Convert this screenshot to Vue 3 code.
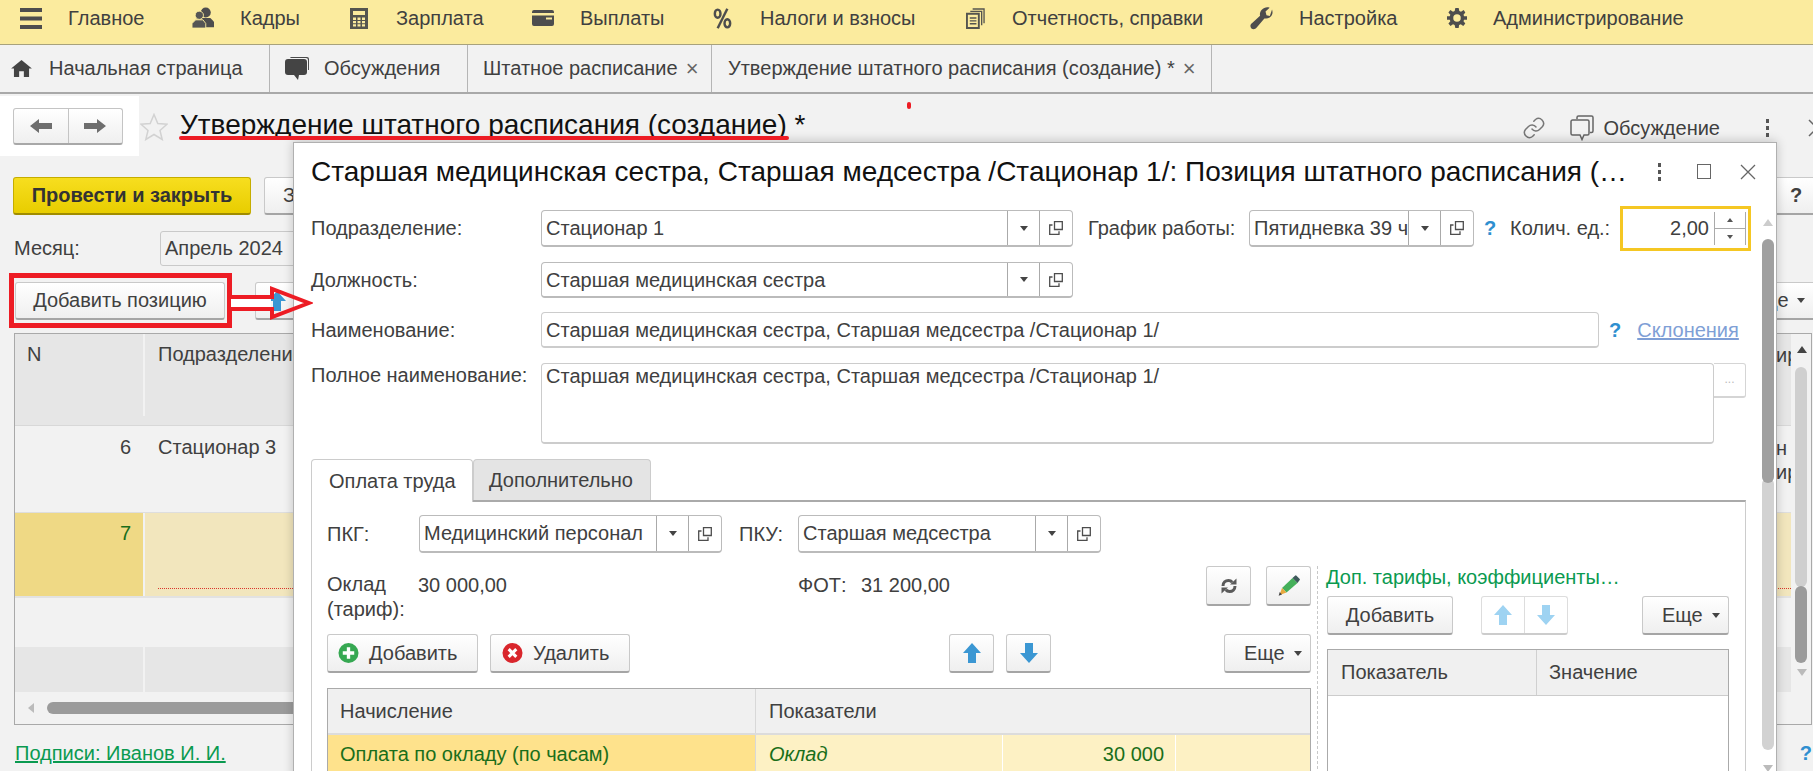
<script setup>
// ширина — от значка до следующего значка, offset — от значка до подписи
const menu = [
  { icon: "i-staff", label: "Кадры", width: 159, offset: 49, w: 24, h: 22 },
  { icon: "i-calc", label: "Зарплата", width: 182, offset: 46, w: 18, h: 21 },
  { icon: "i-wallet", label: "Выплаты", width: 180, offset: 48, w: 22, h: 16 },
  { icon: "i-percent", label: "Налоги и взносы", width: 254, offset: 48, w: 21, h: 21 },
  { icon: "i-docs", label: "Отчетность, справки", width: 284, offset: 46, w: 19, h: 21 },
  { icon: "i-wrench", label: "Настройка", width: 197, offset: 49, w: 23, h: 23 },
  { icon: "i-gear", label: "Администрирование", width: 340, offset: 46, w: 20, h: 20 }
];
</script>

<template>
  <div class="page">
    <svg class="sprite" aria-hidden="true">
      <symbol id="i-burger" viewBox="0 0 22 21"><path d="M0 0h22v4H0zM0 8.500h22v4H0zM0 17h22v4H0z" fill="#4d4d4d" /></symbol>
      <symbol id="i-staff" viewBox="0 0 26 24"><circle cx="16" cy="6" r="5.500" fill="#4d4d4d" /><path d="M11 12h10l4 4v6H13z" fill="#4d4d4d" /><circle cx="9" cy="9" r="4.500" fill="#555" stroke="#fbeb9e" /><path d="M1 23v-5l4-4h8l3 4v5z" fill="#555" stroke="#fbeb9e" /></symbol>
      <symbol id="i-calc" viewBox="0 0 18 21"><path fill-rule="evenodd" fill="#55554f" d="M0 0h18v21H0zM3 3v4h12V3zM3 9.500v2.500h3V9.500zM7.500 9.500v2.500h3V9.500zM12 9.500v2.500h3V9.500zM3 13v2.200h3V13zM7.500 13v2.200h3V13zM12 13v2.200h3V13zM3 16.200v2.300h3v-2.300zM7.500 16.200v2.300h3v-2.300zM12 16.200v2.300h3v-2.300z" /></symbol>
      <symbol id="i-wallet" viewBox="0 0 22 16"><path fill="#4d4d4d" fill-rule="evenodd" d="M2 0h18a2 2 0 0 1 2 2v1H0V2a2 2 0 0 1 2-2zM0 5.500h22V14a2 2 0 0 1-2 2H2a2 2 0 0 1-2-2zM14 7.500v2h6v-2z" /></symbol>
      <symbol id="i-percent" viewBox="0 0 24 26"><g fill="none" stroke="#4d4d4d" stroke-width="3"><ellipse cx="6" cy="7" rx="3.500" ry="5" /><ellipse cx="18" cy="19" rx="3.500" ry="5" /><path d="M18 1 6 25" /></g></symbol>
      <symbol id="i-docs" viewBox="0 0 20 22"><g fill="none" stroke="#55554f" stroke-width="1.400"><path d="M7 1h12v15" /><path d="M4.500 3.500h12V18" /><path d="M1 6h12.500v15H1z" fill="#fbeb9e" stroke-width="2" /><path d="M4 10.500h7M4 13.500h7M4 16.500h7" /></g></symbol>
      <symbol id="i-wrench" viewBox="0 0 24 24"><path fill="#4d4d4d" d="M23 2.500c1.200 3.500.3 6.500-2.500 8.500-1.800 1.200-3.800 1.300-5.500.9L7 21.500c-1.500 2-4 2.300-5.500.9S0 18.500 2 17l8.500-7.800c-.5-2 0-4.500 1.800-6.300C14.500.5 17.500-.3 20.500.7l-4.300 4 1 3.800 3.500.8z" /></symbol>
      <symbol id="i-gear" viewBox="0 0 24 24"><path fill="#4d4d4d" fill-rule="evenodd" d="M10 0h4l.8 3.500 2 .9L20 2.500 22 5.500 19.800 8l.7 2H24v4h-3.500l-.7 2 2.200 2.500-2.500 3-3-2-2 .9L14 24h-4l-.8-3.600-2-.9-3 2L1.700 18.500 4 16l-.7-2H0v-4h3.300L4 8 1.700 5.500 4 2.500l3.200 1.900 2-.9zM12 7.500a4.500 4.500 0 1 0 0 9 4.500 4.500 0 0 0 0-9z" /></symbol>
      <symbol id="i-home" viewBox="0 0 22 18"><path fill="#444" d="M11 0 22 9h-3v9h-5.500v-6h-5v6H3V9H0z" /></symbol>
      <symbol id="i-chat" viewBox="0 0 24 23"><path fill="#4a4a4a" d="M7 0h15a2 2 0 0 1 2 2v11h-1V3a2 2 0 0 0-2-2H5a2 2 0 0 1 2-1z" /><path fill="#444" d="M3 2h16a3 3 0 0 1 3 3v10a3 3 0 0 1-3 3h-5l-1 5-4-5H3a3 3 0 0 1-3-3V5a3 3 0 0 1 3-3z" /></symbol>
      <symbol id="i-open" viewBox="0 0 14 14"><path fill="none" stroke="#4d4d4d" stroke-width="1.300" d="M5.500 .7h7.800v7.800H5.500zM3.500 4H.7v9.300H10v-3" /></symbol>
      <symbol id="i-up" viewBox="0 0 18 20"><path d="M9 0 18 10h-5v10H5V10H0z" /></symbol>
    </svg>

    <header class="topbar">
      <svg class="burger"><use href="#i-burger" /></svg>
      <span class="menu-first">Главное</span>
      <div v-for="item in menu" :key="item.label" class="menu-item" :style="{ width: item.width + 'px' }">
        <span class="menu-slot" :style="{ width: item.offset + 'px' }">
          <svg :style="{ width: item.w + 'px', height: item.h + 'px' }"><use :href="'#' + item.icon" /></svg>
        </span>
        <span>{{ item.label }}</span>
      </div>
    </header>

    <nav class="tabs">
      <div class="tab tab-home"><svg class="tab-icon"><use href="#i-home" /></svg>Начальная страница</div>
      <div class="tab tab-chat"><svg class="tab-chat-icon"><use href="#i-chat" /></svg>Обсуждения</div>
      <div class="tab tab-staff">Штатное расписание <span class="tab-x">×</span></div>
      <div class="tab tab-doc">Утверждение штатного расписания (создание) * <span class="tab-x">×</span></div>
    </nav>

    <section class="head">
      <div class="nav-box">
        <div class="nav-btns">
          <span class="nav-arrow"><svg viewBox="0 0 22 14"><path d="M0 7 9 0v4h13v6H9v4z" fill="#6e6e6e" /></svg></span>
          <span class="nav-arrow"><svg viewBox="0 0 22 14"><path d="M22 7 13 0v4H0v6h13v4z" fill="#6e6e6e" /></svg></span>
        </div>
      </div>
      <svg class="star" viewBox="0 0 28 28"><path d="M14 1.500 17.800 10.500 27 11.200 20 17.500 22.200 26.500 14 21.500 5.800 26.500 8 17.500 1 11.200 10.200 10.500z" fill="none" stroke="#d2d2d2" stroke-width="1.500" /></svg>
      <h1 class="doc-title">Утверждение штатного расписания (создание) *</h1>
      <div class="head-tools">
        <svg class="link-icon" viewBox="0 0 24 24"><g fill="none" stroke="#777" stroke-width="1.500" stroke-linecap="round"><path d="M10 13a5 5 0 0 0 7.500.5l3-3a5 5 0 0 0-7-7l-1.700 1.700" /><path d="M14 11a5 5 0 0 0-7.500-.5l-3 3a5 5 0 0 0 7 7l1.700-1.700" /></g></svg>
        <svg class="talk-icon" viewBox="0 0 24 26"><g fill="none" stroke="#666" stroke-width="1.500"><path d="M7 4V2.500A1.500 1.500 0 0 1 8.500 1h13A1.500 1.500 0 0 1 23 2.500V16a1.500 1.500 0 0 1-1.500 1.500H20" /><path d="M2.500 5h15A1.500 1.500 0 0 1 19 6.500v12a1.500 1.500 0 0 1-1.500 1.500H14l-2 4.500L10 20H2.500A1.500 1.500 0 0 1 1 18.500v-12A1.500 1.500 0 0 1 2.500 5z" /></g></svg>
        <span class="talk">Обсуждение</span>
        <span class="dots"><i></i><i></i><i></i></span>
        <svg class="head-chevron" viewBox="0 0 10 18"><path d="m1 1 8 8-8 8" fill="none" stroke="#666" stroke-width="1.500" /></svg>
      </div>
    </section>

    <section class="command">
      <button class="btn btn-primary">Провести и закрыть</button>
      <button class="btn btn-save">Записать</button>
      <button class="btn btn-help">?</button>
    </section>

    <section class="month">
      <span class="month-label">Месяц:</span>
      <div class="month-input">Апрель 2024</div>
    </section>

    <section class="actions">
      <button class="btn btn-add-pos">Добавить позицию</button>
      <button class="btn btn-move"><svg viewBox="0 0 18 20" fill="#3b97d3"><use href="#i-up" /></svg></button>
      <button class="btn btn-more-bg">Еще <b class="caret"></b></button>
    </section>

    <section class="grid">
      <div class="grid-row grid-header"><div class="c-n">N</div><div class="c-name">Подразделение</div><div class="c-end">ир</div></div>
      <div class="grid-row grid-six"><div class="c-n right">6</div><div class="c-name">Стационар 3</div><div class="c-end">н<br />ир</div></div>
      <div class="grid-row grid-seven"><div class="c-n right">7</div><div class="c-name"><i class="dotted"></i></div></div>
      <div class="grid-row grid-empty"></div>
      <div class="grid-row grid-footer"><div class="c-n"></div><div class="c-name"></div></div>
      <div class="grid-scroll"><b class="tri-left"></b><i class="grid-thumb"></i></div>
      <div class="grid-vscroll"><b class="tri-up"></b><i class="v-light"></i><i class="v-dark"></i><b class="tri-down"></b></div>
    </section>

    <div class="bottom">
      <a class="sign">Подписи: Иванов И. И.</a>
      <span class="hint bottom-hint">?</span>
    </div>

    <!-- окно позиции поверх документа -->
    <div class="modal">
      <div class="modal-head">
        <h2>Старшая медицинская сестра, Старшая медсестра /Стационар 1/: Позиция штатного расписания (…</h2>
        <span class="dots"><i></i><i></i><i></i></span>
        <span class="win-max"></span>
        <svg class="win-close" viewBox="0 0 16 16"><path d="m1 1 14 14M15 1 1 15" fill="none" stroke="#666" stroke-width="1.300" /></svg>
      </div>

      <div class="form-row row-one">
        <label class="lbl">Подразделение:</label>
        <div class="field w-sub"><span class="val">Стационар 1</span><span class="drop"><b class="caret"></b></span><span class="open"><svg><use href="#i-open" /></svg></span></div>
        <label class="lbl lbl-sched">График работы:</label>
        <div class="field w-sched"><span class="val">Пятидневка 39 ч</span><span class="drop"><b class="caret"></b></span><span class="open"><svg><use href="#i-open" /></svg></span></div>
        <span class="hint hint-sched">?</span>
        <label class="lbl lbl-qty">Колич. ед.:</label>
        <div class="qty">
          <span class="qty-val">2,00</span>
          <span class="spin"><span><b class="tiny-up"></b></span><span><b class="tiny-down"></b></span></span>
        </div>
      </div>

      <div class="form-row row-two">
        <label class="lbl">Должность:</label>
        <div class="field w-sub"><span class="val">Старшая медицинская сестра</span><span class="drop"><b class="caret"></b></span><span class="open"><svg><use href="#i-open" /></svg></span></div>
      </div>

      <div class="form-row row-three">
        <label class="lbl">Наименование:</label>
        <div class="field w-name"><span class="val">Старшая медицинская сестра, Старшая медсестра /Стационар 1/</span></div>
        <span class="hint hint-name">?</span>
        <a class="decl">Склонения</a>
      </div>

      <div class="form-row row-four">
        <label class="lbl lbl-top">Полное наименование:</label>
        <div class="area">Старшая медицинская сестра, Старшая медсестра /Стационар 1/</div>
        <span class="area-btn">...</span>
      </div>

      <div class="page-tabs">
        <div class="ptab ptab-on">Оплата труда</div>
        <div class="ptab ptab-off">Дополнительно</div>
      </div>

      <div class="panel">
        <div class="pay">
          <div class="pkg-row">
            <label class="lbl lbl-pkg">ПКГ:</label>
            <div class="field w-pkg"><span class="val">Медицинский персонал</span><span class="drop"><b class="caret"></b></span><span class="open"><svg><use href="#i-open" /></svg></span></div>
            <label class="lbl lbl-pku">ПКУ:</label>
            <div class="field w-pku"><span class="val">Старшая медсестра</span><span class="drop"><b class="caret"></b></span><span class="open"><svg><use href="#i-open" /></svg></span></div>
          </div>

          <div class="sum-row">
            <div class="sum-label">Оклад<br />(тариф):</div>
            <div class="sum-value">30 000,00</div>
            <div class="fot-label">ФОТ:</div>
            <div class="fot-value">31 200,00</div>
            <button class="btn btn-square btn-refresh">
              <svg viewBox="0 0 16 16"><g fill="none" stroke="#5a5a5a" stroke-width="3"><path d="M2 8c0-3.500 2.500-5.500 5.500-5.500 1.500 0 2.800.6 3.700 1.700" /><path d="M14 8c0 3.500-2.500 5.500-5.500 5.500-1.500 0-2.800-.6-3.700-1.700" /></g><path d="M9 6.500h6.500V.5zM7 9.500H.5v6z" fill="#5a5a5a" /></svg>
            </button>
            <button class="btn btn-square btn-pencil">
              <svg viewBox="0 0 22 21"><path d="M14.500 3 19.500 8 8.500 17.500 4 13z" fill="#45b05a" /><path d="M14.500 3 17 .7a1 1 0 0 1 1.500 0l3 3a1 1 0 0 1 0 1.500L19.500 8z" fill="#3f5a5c" /><path d="M4 13 8.500 17.500 1.500 20z" fill="#e8a83e" /><path d="M.7 20.700 1.700 17 4 19.500z" fill="#444" /></svg>
            </button>
          </div>

          <div class="tool-row">
            <button class="btn btn-add"><svg class="round" viewBox="0 0 22 22"><circle cx="11" cy="11" r="10.500" fill="#36a852" /><path d="M11 5v12M5 11h12" stroke="#fff" stroke-width="3.500" /></svg>Добавить</button>
            <button class="btn btn-del"><svg class="round" viewBox="0 0 22 22"><circle cx="11" cy="11" r="10.500" fill="#d9262c" /><path d="m7 7 8 8M15 7l-8 8" stroke="#fff" stroke-width="3.200" /></svg>Удалить</button>
            <button class="btn btn-arrow btn-up"><svg viewBox="0 0 18 20" fill="#3b97d3"><use href="#i-up" /></svg></button>
            <button class="btn btn-arrow btn-down"><svg class="flip" viewBox="0 0 18 20" fill="#3b97d3"><use href="#i-up" /></svg></button>
            <button class="btn btn-more">Еще <b class="caret"></b></button>
          </div>

          <div class="accr">
            <div class="accr-head"><div class="a-name">Начисление</div><div class="a-ind">Показатели</div></div>
            <div class="accr-row"><div class="a-name">Оплата по окладу (по часам)</div><div class="a-ind">Оклад</div><div class="a-sum">30 000</div><div class="a-rest"></div></div>
          </div>
        </div>

        <div class="extra">
          <div class="extra-title">Доп. тарифы, коэффициенты…</div>
          <div class="extra-tools">
            <button class="btn btn-extra-add">Добавить</button>
            <div class="arrow-pair">
              <span><svg viewBox="0 0 18 20" fill="#9ed3f2"><use href="#i-up" /></svg></span>
              <span><svg class="flip" viewBox="0 0 18 20" fill="#9ed3f2"><use href="#i-up" /></svg></span>
            </div>
            <button class="btn btn-more btn-more-extra">Еще <b class="caret"></b></button>
          </div>
          <div class="extra-table">
            <div class="extra-head"><div class="e-ind">Показатель</div><div class="e-val">Значение</div></div>
          </div>
        </div>
      </div>

      <div class="modal-scroll"><b class="tri-up pale"></b><i class="ms-track"></i><i class="ms-thumb"></i><b class="tri-down pale"></b></div>
    </div>

    <!-- красные пометки на скриншоте -->
    <i class="mark-box"></i>
    <svg class="mark-arrow" viewBox="0 0 82 36"><path d="M2 11h39V3l37 14-37 14v-8H2z" fill="none" stroke="#ed1c24" stroke-width="4" /><path d="M0 13h40v8H0z" fill="#fff" /></svg>
    <i class="mark-line"></i>
    <i class="mark-dot"></i>
  </div>
</template>

<style scoped>
.page {
  position: relative;
  width: 1813px;
  height: 771px;
  overflow: hidden;
  background: #f2f2f2;
  color: #404040;
  font: 20px "Liberation Sans", Arial, sans-serif;
}
.sprite { position: absolute; width: 0; height: 0; }

.topbar {
  display: flex;
  align-items: center;
  height: 36px;
  padding: 0 0 8px 20px;
  background: #fbeb9e;
  border-bottom: 1px solid #a8a27c;
}
.burger { width: 22px; height: 21px; margin-right: 26px; flex: none; }
.menu-first { width: 123px; flex: none; }
.menu-item { display: flex; align-items: center; flex: none; white-space: nowrap; }
.menu-slot { display: flex; align-items: center; flex: none; }

.tabs {
  display: flex;
  height: 47px;
  border-bottom: 2px solid #a9a9a9;
}
.tab {
  display: flex;
  align-items: center;
  border-right: 1px solid #b5b5b5;
  white-space: nowrap;
  box-sizing: border-box;
}
.tab-home { width: 270px; padding-left: 11px; }
.tab-icon { width: 21px; height: 17px; margin-right: 17px; }
.tab-chat { width: 198px; padding-left: 15px; }
.tab-chat-icon { width: 24px; height: 23px; margin-right: 15px; }
.tab-staff { width: 244px; padding-left: 15px; }
.tab-doc { width: 500px; padding-left: 16px; }
.tab-x { margin-left: 8px; font-size: 22px; color: #666; }

.head { display: flex; height: 62px; align-items: center; }
.nav-box { width: 139px; height: 60px; background: #fff; flex: none; margin-top: 1px; padding: 12px 0 0 13px; box-sizing: border-box; }
.nav-btns {
  display: flex;
  width: 110px;
  height: 37px;
  border: 1px solid #c4c4c4;
  border-bottom: 2px solid #a8a8a8;
  border-radius: 3px;
  background: linear-gradient(#fff, #efefef);
  box-sizing: border-box;
}
.nav-arrow { flex: 1; display: flex; align-items: center; justify-content: center; }
.nav-arrow + .nav-arrow { border-left: 1px solid #c4c4c4; }
.nav-arrow svg { width: 22px; height: 14px; }
.star { width: 28px; height: 28px; margin-left: 1px; margin-top: 3px; flex: none; }
.doc-title { margin: 0 0 0 12px; font-size: 28px; font-weight: 400; color: #111; white-space: nowrap; flex: none; }
.head-tools { flex: 1; display: flex; align-items: center; justify-content: flex-end; height: 100%; }
.link-icon { width: 24px; height: 24px; margin-right: 24px; margin-top: 6px; }
.talk-icon { width: 24px; height: 26px; margin-right: 9px; margin-top: 6px; }
.talk { margin-top: 6px; margin-right: 46px; }
.head-tools .dots { margin-top: 6px; margin-right: 38px; }
.head-chevron { width: 10px; height: 18px; margin-top: 6px; margin-right: -5px; }
.dots { display: flex; flex-direction: column; gap: 3px; width: 4px; flex: none; }
.dots i { width: 3px; height: 4px; background: #555; }

.btn {
  display: inline-flex;
  align-items: center;
  justify-content: center;
  height: 38px;
  padding: 0;
  border: 1px solid #c9c9c9;
  border-bottom: 2px solid #a5a5a5;
  border-radius: 3px;
  background: linear-gradient(#fff, #efefef);
  color: #404040;
  font: inherit;
  box-sizing: border-box;
  white-space: nowrap;
}
.caret { display: inline-block; width: 0; height: 0; border: 4px solid transparent; border-top: 5px solid #444; border-bottom: 0; }

.command { display: flex; height: 38px; margin-top: 21px; padding-left: 13px; position: relative; }
.btn-primary {
  width: 238px;
  border-color: #c5ad00;
  border-bottom-color: #a08c00;
  background: linear-gradient(#f7de1f, #e8cd00);
  color: #333;
  font-weight: 700;
}
.btn-save { width: 100px; margin-left: 13px; justify-content: flex-start; padding-left: 18px; }
.btn-help { position: absolute; left: 1760px; width: 60px; justify-content: flex-start; padding-left: 29px; font-weight: 700; }

.month { display: flex; align-items: center; height: 36px; margin-top: 15px; padding-left: 14px; }
.month-label { width: 146px; }
.month-input { width: 300px; height: 35px; line-height: 33px; padding-left: 4px; border: 1px solid #c9c9c9; border-radius: 3px; background: #f2f2f2; box-sizing: border-box; }

.actions { position: relative; display: flex; height: 38px; margin-top: 16px; padding-left: 15px; }
.btn-add-pos { width: 210px; }
.btn-move { width: 100px; margin-left: 30px; justify-content: flex-start; padding-left: 12px; }
.btn-move svg { width: 18px; height: 20px; }
.btn-more-bg { position: absolute; left: 1727px; width: 100px; justify-content: flex-start; padding-left: 20px; gap: 8px; }

.grid { position: relative; height: 392px; margin: 13px 1px 0 14px; border: 1px solid #a9a9a9; box-sizing: border-box; overflow: hidden; }
.grid-row { display: flex; }
.c-n { width: 130px; padding: 0 12px; box-sizing: border-box; border-right: 2px solid #f2f2f2; }
.right { text-align: right; }
.c-name { flex: 1; position: relative; padding: 0 13px; }
.c-end { width: 35px; line-height: 24px; overflow: hidden; flex: none; }
.grid-header { height: 92px; background: #e6e6e6; padding-top: 9px; box-sizing: border-box; border-bottom: 1px solid #d8d8d8; }
.grid-header .c-n { height: 100%; margin-top: -9px; padding-top: 9px; }
.grid-six { height: 87px; padding-top: 10px; box-sizing: border-box; border-bottom: 1px solid #dedede; }
.grid-seven { height: 85px; color: #1a6e1a; border-bottom: 2px solid #e2e2e2; box-sizing: border-box; padding-right: 20px; }
.grid-seven .c-n { background: #efd985; padding-top: 9px; }
.grid-seven .c-name { background: #f2e6bd; }
.dotted { position: absolute; left: 13px; right: 0; bottom: 7px; border-top: 1px dotted #d9362c; }
.grid-empty { height: 49px; }
.grid-footer { height: 45px; background: #e6e6e6; padding-right: 20px; }
.grid-scroll { position: absolute; left: 0; right: 0; top: 368px; height: 14px; }
.grid-thumb { position: absolute; left: 32px; right: 180px; height: 12px; background: #9b9b9b; border-radius: 6px; }
.tri-left { position: absolute; left: 13px; top: 1px; border: 5px solid transparent; border-right: 6px solid #bbb; border-left: 0; }
.grid-vscroll { position: absolute; top: 0; right: 0; width: 20px; height: 100%; background: #f2f2f2; }
.tri-up, .tri-down { position: absolute; width: 0; height: 0; border: 5px solid transparent; }
.tri-up { border-bottom: 7px solid #444; border-top: 0; }
.tri-down { border-top: 7px solid #bbb; border-bottom: 0; }
.grid-vscroll .tri-up { top: 12px; left: 6px; }
.grid-vscroll .tri-down { top: 335px; left: 6px; }
.v-light { position: absolute; left: 4px; top: 33px; width: 12px; height: 220px; border-radius: 6px; background: #cfcfcf; }
.v-dark { position: absolute; left: 4px; top: 252px; width: 12px; height: 77px; border-radius: 6px; background: #9b9b9b; }

.bottom { display: flex; justify-content: space-between; margin: 17px 0 0 15px; }
.sign { color: #0a9a50; text-decoration: underline; }
.bottom-hint { margin-right: 1px; }

.modal {
  position: absolute;
  left: 293px;
  top: 142px;
  width: 1484px;
  height: 640px;
  padding-left: 17px;
  background: #fff;
  border: 1px solid #b0b0b0;
  box-sizing: border-box;
  box-shadow: 0 -1px 10px rgba(0, 0, 0, 0.2);
}
.modal-head { height: 67px; display: flex; align-items: center; padding-bottom: 10px; box-sizing: border-box; }
.modal-head h2 { width: 1330px; flex: none; margin: 0; font-size: 28px; font-weight: 400; color: #111; white-space: nowrap; overflow: hidden; }
.modal-head .dots { margin-left: 17px; }
.win-max { width: 14px; height: 15px; margin-left: 35px; border: 1.500px solid #666; box-sizing: border-box; flex: none; }
.win-close { width: 16px; height: 16px; margin-left: 29px; flex: none; }

.form-row { display: flex; align-items: center; }
.row-one { height: 37px; }
.row-two { height: 36px; margin-top: 15px; }
.row-three { height: 36px; margin-top: 14px; }
.row-four { height: 81px; margin-top: 15px; align-items: flex-start; }
.lbl { flex: none; width: 230px; white-space: nowrap; }
.lbl-top { padding-top: 1px; }
.field {
  display: flex;
  flex: none;
  height: 100%;
  border: 1px solid #bbb;
  border-bottom-width: 2px;
  border-radius: 4px;
  box-sizing: border-box;
  background: #fff;
}
.val { flex: 1; min-width: 0; padding-left: 4px; line-height: 34px; overflow: hidden; white-space: nowrap; }
.drop, .open { display: flex; align-items: center; justify-content: center; flex: none; border-left: 1px solid #aaa; }
.drop { width: 31px; }
.open { width: 32px; }
.open svg { width: 14px; height: 14px; }
.w-sub { width: 532px; }
.lbl-sched { width: 161px; margin-left: 15px; }
.w-sched { width: 225px; }
.hint { flex: none; color: #2f8fd0; font-weight: 700; }
.hint-sched { width: 26px; margin-left: 10px; }
.lbl-qty { width: 110px; }
.qty { flex: none; display: flex; width: 131px; height: 45px; border: 3px solid #f5c723; box-sizing: border-box; }
.qty-val { width: 86px; line-height: 38px; text-align: right; }
.spin { display: flex; flex-direction: column; flex: none; width: 32px; margin: 3px 0 3px 5px; border: 1px solid #aaa; border-width: 0 1px; box-sizing: border-box; }
.spin span { flex: 1; display: flex; align-items: center; justify-content: center; }
.spin span + span { border-top: 1px solid #aaa; }
.tiny-up { border: 3px solid transparent; border-bottom: 4px solid #555; border-top: 0; }
.tiny-down { border: 3px solid transparent; border-top: 4px solid #555; border-bottom: 0; }
.w-name { width: 1058px; border-color: #ccc; }
.hint-name { margin-left: 10px; }
.decl { margin-left: 16px; color: #7f9fd6; text-decoration: underline; }
.area { flex: none; width: 1173px; height: 100%; padding: 1px 4px; border: 1px solid #ccc; border-bottom-width: 2px; border-radius: 4px; box-sizing: border-box; }
.area-btn { flex: none; width: 32px; height: 35px; line-height: 30px; text-align: center; font-size: 12px; color: #bbb; border: 1px solid #d5d5d5; border-bottom-width: 2px; border-left: 0; border-radius: 0 3px 3px 0; box-sizing: border-box; }

.page-tabs { display: flex; height: 41px; margin-top: 15px; }
.ptab { display: flex; align-items: center; box-sizing: border-box; border: 1px solid #ccc; border-bottom: 0; border-radius: 4px 4px 0 0; }
.ptab-on { position: relative; z-index: 1; width: 162px; height: 43px; padding-left: 17px; background: #fff; }
.ptab-off { width: 178px; padding-left: 15px; background: #e4e4e4; }
.panel { display: flex; width: 1435px; height: 300px; border: 1px solid #ccc; border-top: 2px solid #aaa; box-sizing: border-box; }
.pay { flex: none; width: 984px; margin-left: 15px; }
.pkg-row { display: flex; align-items: center; height: 38px; margin-top: 13px; }
.lbl-pkg { width: 92px; }
.w-pkg { width: 303px; }
.lbl-pku { width: 59px; margin-left: 17px; }
.w-pku { width: 303px; }
.sum-row { display: flex; height: 60px; margin-top: 13px; line-height: 25px; }
.sum-label { width: 91px; padding-top: 6px; }
.sum-value { width: 380px; padding-top: 7px; }
.fot-label { width: 63px; padding-top: 7px; }
.fot-value { width: 320px; padding-top: 7px; }
.btn-square { width: 45px; height: 40px; }
.btn-refresh { margin-left: 25px; }
.btn-pencil { margin-left: 15px; }
.btn-refresh svg { width: 16px; height: 16px; }
.btn-pencil svg { width: 22px; height: 21px; }
.tool-row { display: flex; height: 39px; margin-top: 8px; }
.btn-add { width: 151px; height: 39px; gap: 10px; justify-content: flex-start; padding-left: 10px; }
.btn-del { width: 140px; height: 39px; margin-left: 12px; gap: 10px; justify-content: flex-start; padding-left: 11px; }
.round { width: 21px; height: 22px; }
.btn-arrow { width: 45px; height: 39px; }
.btn-arrow svg { width: 18px; height: 20px; }
.btn-up { margin-left: 319px; }
.btn-down { margin-left: 12px; }
.flip { transform: rotate(180deg); }
.btn-more { width: 87px; height: 39px; margin-left: auto; gap: 9px; justify-content: flex-start; padding-left: 19px; }
.accr { margin-top: 15px; height: 90px; border: 1px solid #aaa; border-bottom: 0; box-sizing: border-box; }
.accr-head, .accr-row { display: flex; }
.accr-head { height: 46px; line-height: 44px; background: #f0f0f0; border-bottom: 2px solid #dcdcdc; box-sizing: border-box; }
.a-name { width: 427px; padding-left: 12px; box-sizing: border-box; flex: none; }
.a-ind { padding-left: 13px; border-left: 1px solid #d8d8d8; }
.accr-row { height: 40px; line-height: 38px; color: #1a6e1a; background: #fdf1c4; }
.accr-row .a-name { background: #fee28c; }
.accr-row .a-ind { width: 247px; box-sizing: border-box; font-style: italic; flex: none; }
.a-sum { width: 173px; padding-right: 11px; text-align: right; box-sizing: border-box; flex: none; border-left: 1px solid #fff; }
.a-rest { flex: 1; border-left: 1px solid #fff; }

.extra { flex: none; width: 412px; margin: 64px 0 0 6px; padding-left: 9px; border-left: 1px dashed #c8c8c8; box-sizing: border-box; }
.extra-title { height: 25px; line-height: 22px; margin-left: -1px; color: #0a9a50; white-space: nowrap; }
.extra-tools { display: flex; margin-top: 5px; }
.btn-extra-add { width: 126px; height: 39px; }
.arrow-pair { display: flex; width: 87px; height: 39px; margin-left: 28px; border: 1px solid #ddd; border-bottom: 2px solid #ccc; border-radius: 3px; box-sizing: border-box; }
.arrow-pair span { flex: 1; display: flex; align-items: center; justify-content: center; }
.arrow-pair span + span { border-left: 1px solid #ddd; }
.arrow-pair svg { width: 18px; height: 20px; }
.btn-more-extra { margin-left: auto; }
.extra-table { height: 200px; margin-top: 14px; border: 1px solid #aaa; border-bottom: 0; box-sizing: border-box; }
.extra-head { display: flex; height: 46px; line-height: 44px; background: #f0f0f0; border-bottom: 1px solid #ccc; box-sizing: border-box; }
.e-ind { width: 209px; padding-left: 13px; box-sizing: border-box; border-right: 1px solid #d0d0d0; }
.e-val { padding-left: 12px; }

.modal-scroll { position: absolute; left: 1468px; top: 0; width: 12px; height: 100%; }
.modal-scroll .tri-up { left: 1px; top: 76px; }
.modal-scroll .tri-down { left: 1px; top: 622px; }
.pale.tri-up { border-bottom-color: #ccc; }
.ms-thumb { position: absolute; left: 0; top: 96px; width: 12px; height: 244px; border-radius: 6px; background: #a0a0a0; }
.ms-track { position: absolute; left: 0; top: 335px; width: 12px; height: 272px; border-radius: 6px; background: #d2d2d2; }

.mark-box { position: absolute; left: 9px; top: 273px; width: 223px; height: 55px; border: 5px solid #ed1c24; box-sizing: border-box; }
.mark-arrow { position: absolute; left: 231px; top: 286px; width: 82px; height: 36px; }
.mark-line { position: absolute; left: 179px; top: 136px; width: 610px; height: 4px; border-radius: 2px; background: #ed1c24; }
.mark-dot { position: absolute; left: 907px; top: 102px; width: 4px; height: 7px; border-radius: 2px; background: #ed1c24; }
</style>
